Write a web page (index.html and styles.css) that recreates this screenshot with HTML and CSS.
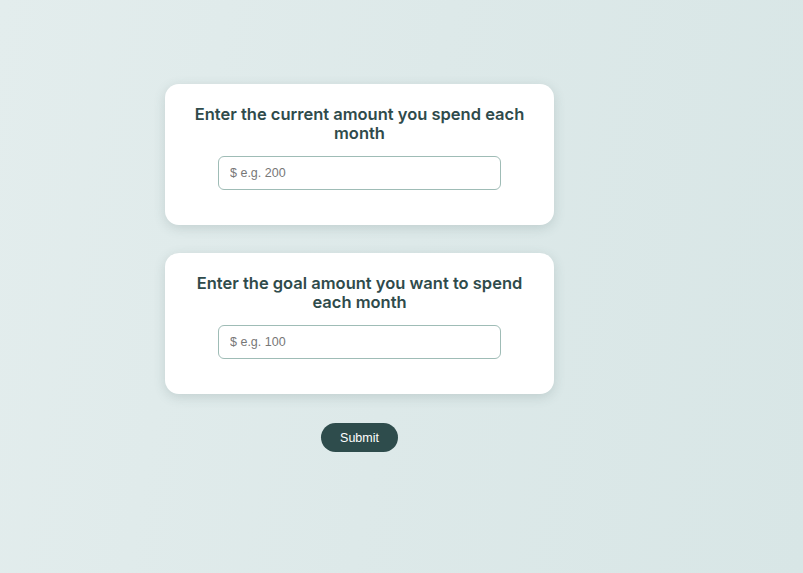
FILE: index.html
```html
<!DOCTYPE html>
<html>
<head lang="en">
    <meta charset="UTF-8">
    <title>Spending goal</title>
    <link rel="stylesheet" href="styles.css">
</head>
<body>
<div class="page">
    <div class="card">
        <h2 class="card-title">Enter the current amount you spend each month</h2>
        <input type="text" class="amount-input" placeholder="$ e.g. 200"/>
    </div>
    <div class="card">
        <h2 class="card-title">Enter the goal amount you want to spend each month</h2>
        <input type="text" class="amount-input" placeholder="$ e.g. 100"/>
    </div>
    <button class="submit-btn">Submit</button>
</div>
</body>
</html>
```

FILE: styles.css
```css
*{
    margin: 0;
    padding: 0;
    box-sizing: border-box;
}
html,body{
    height: 100%;
}
body{
    background: linear-gradient(100deg, #e3eded 0%, #dde9e9 50%, #d8e6e6 100%);
    font-family: "Liberation Sans", Arial, sans-serif;
}
.page{
    width: 389px;
    margin-left: 165px;
    padding-top: 84px;
    display: flex;
    flex-direction: column;
    align-items: center;
    gap: 28px;
}
.card{
    width: 100%;
    height: 141px;
    background: #fff;
    border-radius: 14px;
    box-shadow: 0 3px 12px rgba(60, 90, 90, 0.18);
    padding: 21px 28px 0 28px;
    display: flex;
    flex-direction: column;
    align-items: center;
}
.card-title{
    font-family: "Inter", "DejaVu Sans", sans-serif;
    font-weight: 600;
    font-size: 16.5px;
    line-height: 19px;
    color: #2f4b4b;
    text-align: center;
}
.amount-input{
    width: 283px;
    height: 34px;
    margin-top: 13px;
    border: 1.5px solid #9fbcb6;
    border-radius: 6px;
    padding: 0 11px;
    font: 12.5px "Liberation Sans", Arial, sans-serif;
    color: #333;
    outline: none;
}
.amount-input::placeholder{
    color: #777;
}
.submit-btn{
    width: 77px;
    height: 29px;
    margin-top: 1px;
    border: none;
    border-radius: 15px;
    background: #2e4c4c;
    color: #fff;
    font: 12.5px "Liberation Sans", Arial, sans-serif;
    cursor: pointer;
}
```
